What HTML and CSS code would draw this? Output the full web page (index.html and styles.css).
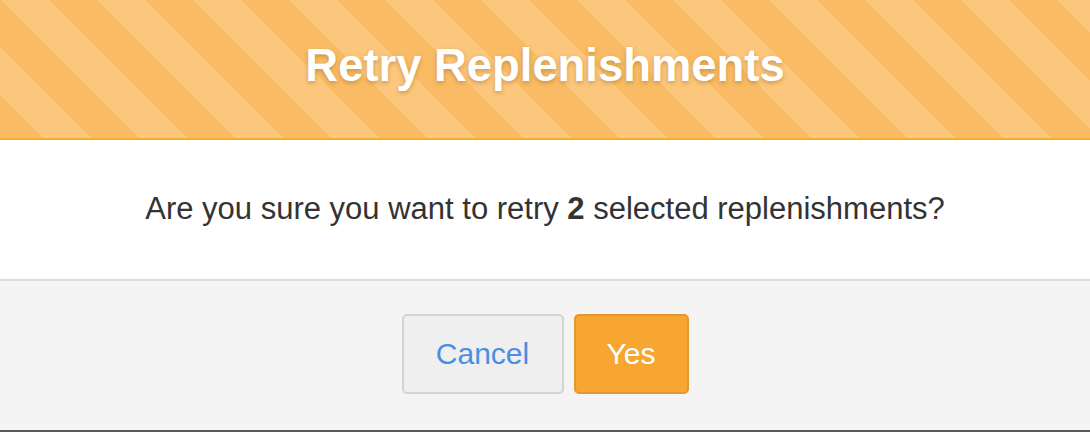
FILE: index.html
```html
<!DOCTYPE html>
<html lang="en">
<head>
<meta charset="utf-8">
<title>Retry Replenishments</title>
<link rel="stylesheet" href="styles.css">
</head>
<body>
<div class="modal">
  <header class="modal-header">
    <h1 class="modal-title">Retry Replenishments</h1>
  </header>
  <section class="modal-body">
    <p class="message">Are you sure you want to retry <strong>2</strong> selected replenishments?</p>
  </section>
  <footer class="modal-footer">
    <button class="btn btn-cancel" type="button">Cancel</button>
    <button class="btn btn-yes" type="button">Yes</button>
  </footer>
</div>
</body>
</html>
```
FILE: styles.css
```css
* { box-sizing: border-box; }
html, body {
  margin: 0;
  padding: 0;
  background: #ffffff;
}
body {
  font-family: "Liberation Sans", Arial, sans-serif;
  width: 1090px;
  height: 432px;
  overflow: hidden;
}
.modal {
  display: flex;
  flex-direction: column;
  height: 432px;
}
.modal-header {
  height: 140px;
  border-bottom: 2px solid #fbad22;
  background-color: #f9bc64;
  background-image: repeating-linear-gradient(45deg,
    #f9bc64 0, #f9bc64 31.1px,
    #fcc67c 31.1px, #fcc67c 65.05px,
    #f9bc64 65.05px, #f9bc64 67.88px);
  display: flex;
  align-items: center;
  justify-content: center;
}
.modal-title {
  margin: 0;
  padding-bottom: 6px;
  color: #ffffff;
  font-size: 45.4px;
  font-weight: bold;
  text-shadow: 0 2px 4px rgba(120, 70, 0, 0.35);
}
.modal-body {
  height: 139px;
  display: flex;
  align-items: center;
  justify-content: center;
}
.message {
  margin: 0;
  padding-bottom: 2px;
  font-size: 31px;
  color: #333333;
}
.message strong { font-weight: bold; }
.modal-footer {
  flex: 1;
  background: #f4f4f4;
  border-top: 2px solid #dcdcdc;
  border-bottom: 2px solid #5a5a5a;
  display: flex;
  justify-content: center;
  align-items: flex-start;
  gap: 10px;
  padding-top: 33px;
}
.btn {
  font-family: "Liberation Sans", Arial, sans-serif;
  font-size: 30px;
  height: 80px;
  border-radius: 5px;
  cursor: pointer;
  line-height: 1;
}
.btn-cancel {
  width: 162px;
  background: #efefef;
  border: 2px solid #d3d3d3;
  color: #4a8ee2;
}
.btn-yes {
  width: 115px;
  background: #f7a632;
  border: 2px solid #e5962c;
  color: #ffffff;
}
```
